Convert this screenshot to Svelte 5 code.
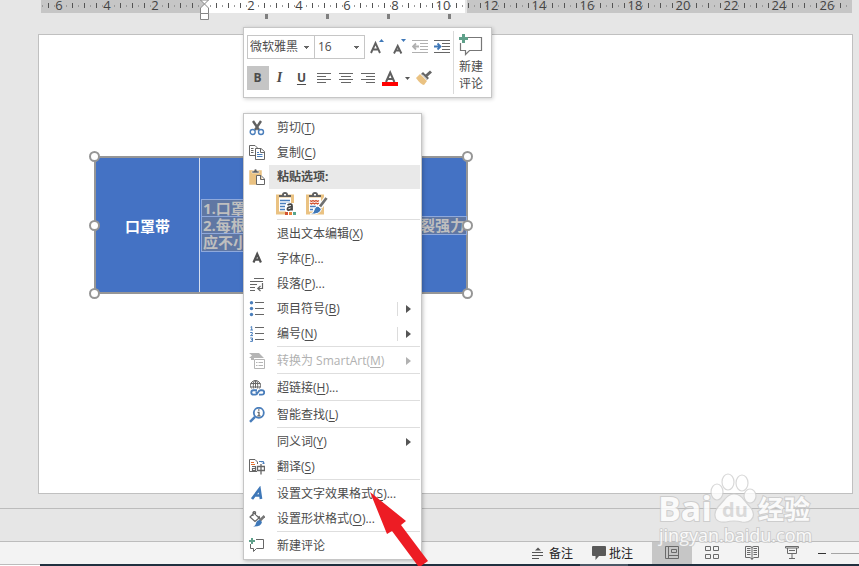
<script>
  const CM = 24;
  const ORIGIN = 163;
  const labels = [];
  const ticks = [];
  const dots = [];
  for (let n = -6; n <= 26; n += 2) {
    if (n !== 0) labels.push({ x: ORIGIN - 1 + n * CM, text: Math.abs(n) });
  }
  for (let i = -13; i <= 53; i++) {
    if (i % 4 !== 0) ticks.push(ORIGIN + i * 12);
    dots.push(ORIGIN + i * 12 - 6);
  }
  dots.push(ORIGIN + 53 * 12 + 6);
  const tabStops = [224, 285, 346, 407];

  const menu = [
    { icon: 'cut', text: '剪切', key: 'T' },
    { icon: 'copy', text: '复制', key: 'C' },
    { header: '粘贴选项:' },
    { paste: true },
    { sep: true },
    { text: '退出文本编辑', key: 'X' },
    { icon: 'font', text: '字体', key: 'F', more: true },
    { icon: 'paragraph', text: '段落', key: 'P', more: true },
    { icon: 'bullets', text: '项目符号', key: 'B', sub: true, split: true },
    { icon: 'numbers', text: '编号', key: 'N', sub: true, split: true },
    { sep: true },
    { icon: 'smartart', text: '转换为 SmartArt', key: 'M', sub: true, disabled: true },
    { sep: true },
    { icon: 'link', text: '超链接', key: 'H', more: true },
    { sep: true },
    { icon: 'lookup', text: '智能查找', key: 'L' },
    { sep: true },
    { text: '同义词', key: 'Y', sub: true },
    { icon: 'translate', text: '翻译', key: 'S' },
    { sep: true },
    { icon: 'effects', text: '设置文字效果格式', key: 'S', more: true },
    { icon: 'shape', text: '设置形状格式', key: 'O', more: true },
    { sep: true },
    { icon: 'comment', text: '新建评论' }
  ];

  const handles = ['tl', 'ml', 'bl', 'tr', 'mr', 'br'];
  const views = [
    { id: 'normal', name: '普通' },
    { id: 'sorter', name: '幻灯片浏览' },
    { id: 'reading', name: '阅读视图' },
    { id: 'show', name: '幻灯片放映' }
  ];
  let view = $state('normal');
  let fontName = $state('微软雅黑');
  let fontSize = $state('16');
  let zoom = $state(60);
</script>

{#snippet icon(name)}
  <svg class="icon" width="16" height="16" viewBox="0 0 16 16" fill="none" stroke="#666" stroke-width="1" aria-hidden="true">
    {#if name === 'cut'}
      <path d="M4 1l6 9M12 1L6 10" stroke-width="2.4" stroke="#606060" />
      <circle cx="3.7" cy="12" r="2.5" stroke="#4a7ebb" stroke-width="1.4" />
      <circle cx="12" cy="12" r="2.5" stroke="#4a7ebb" stroke-width="1.4" />
    {:else if name === 'copy'}
      <path d="M6 10.500H.5V.5H6L8.500 3M2 3.500H4.500M2 5.500H4.500M2 7.500H4.500" />
      <path d="M6.500 3.500H12L15.500 6.500V14.500H6.500ZM11.500 4V7.500H15" fill="#fff" />
      <path d="M8 7.500H10M8 9.500H13.500M8 11.500H13.500" stroke="#4a7ebb" />
    {:else if name === 'font'}
      <path d="M4.500 11.500L8.200 3L11.900 11.500M5.800 8.700H10.600" stroke-width="2.200" stroke="#505050" />
    {:else if name === 'paragraph'}
      <path d="M5 2.500H15M1 5.500H14M1 8.500H8M1 11.500H6M1 14.500H6" />
      <path d="M13.500 7V12.500H9M11.500 10L8.800 12.500L11.500 15" stroke-width="1.200" />
    {:else if name === 'bullets'}
      <path d="M6 1.500H15M6 7.500H15M6 13.500H15" />
      <g fill="#4a7ebb" stroke="none"><circle cx="2.500" cy="1.700" r="1.700" /><circle cx="2.500" cy="7.500" r="1.700" /><circle cx="2.500" cy="13.500" r="1.700" /></g>
    {:else if name === 'numbers'}
      <path d="M6 1.500H15M6 7.500H15M6 13.500H15" />
      <path d="M1.500 1.200L2.700 .5V4M1.300 4H4M1.200 6.500H3.300V8.200L1.500 9.600H4M1.200 12H3.500V15.400H1.200M2 13.700H3.500" stroke="#4a7ebb" />
    {:else if name === 'smartart'}
      <path d="M0 0H10L15 5H5V7H2V5H0L3 2.500Z" fill="#b5b5b5" stroke="none" />
      <path d="M5.500 6.500H15.500V15.500H5.500Z" fill="#fff" stroke="#b5b5b5" />
      <path d="M7 9.500H8.500M9.500 9.500H14M7 12.500H8.500M9.500 12.500H14" stroke="#b5b5b5" />
    {:else if name === 'link'}
      <circle cx="6.500" cy="5.500" r="5" />
      <ellipse cx="6.500" cy="5.500" rx="2.200" ry="5" />
      <path d="M1.500 3.500H11.500M1.500 7H11.500M6.500 .5V8" />
      <path d="M1 8.500H16V16H1Z" fill="#fff" stroke="none" />
      <path d="M8 10.200H4.500A2.200 2.200 0 0 0 4.500 14.600H6.500Q8 14.600 9 12.400T11.500 10.200H13A2.200 2.200 0 0 1 13 14.600H10M6.500 12.400H8" stroke="#4a7ebb" stroke-width="1.900" />
    {:else if name === 'lookup'}
      <circle cx="9.800" cy="5.800" r="5" stroke="#4a7ebb" stroke-width="1.800" />
      <path d="M6 9.800L1 14.800" stroke="#4a7ebb" stroke-width="2.500" />
      <path d="M9.800 2.300V3.800M8.500 5.300H10V8.800M8.300 8.800H11.500" stroke-width="1.300" />
    {:else if name === 'translate'}
      <path d="M8 12.500H.5V.5H6L8.500 3V5" />
      <path d="M2 3.500H5M2 5.500H6" stroke="#e0702f" />
      <path d="M3 7.500H6.500V11.500H3.500V9.500H6.500" stroke-width="1.200" />
      <path d="M8.500 7.500H15.500V11.500H8.500ZM12 5V15.500" stroke-width="1.300" />
      <path d="M10 2.500H14.500V5M13 3.500L14.500 5L16 3.500" stroke="#4a7ebb" />
    {:else if name === 'effects'}
      <path d="M3 13L10.500 3L12 13M6 9.500H11.500" stroke="#3f78b8" stroke-width="2.700" />
    {:else if name === 'shape'}
      <path d="M5 2L10 7L6 10.500L1 6ZM4 5V1.500Q5 0 6.500 1V4M10 5L11 8" stroke-width="1.200" />
      <path d="M15.500 5L10.500 10" stroke="#777" stroke-width="2.500" />
      <path d="M11 9L13 11Q12 16 4 15.500Q7 14.500 7 12Q8 9 11 9Z" fill="#3f78b8" stroke="none" />
    {:else if name === 'comment'}
      <path d="M7 1.500H14.500V10.500H7.500L4.500 13.500V10.500H1.500V6" />
      <path d="M3 0V6M0 3H6" stroke="#5fa08a" stroke-width="2" />
    {/if}
  </svg>
{/snippet}

{#snippet clipboard(kind)}
  <svg width="24" height="24" viewBox="0 0 24 24" fill="none" aria-hidden="true">
    <path d="M2.500 4H17.500V21H2.500Z" stroke="#eac282" stroke-width="3" fill="#fff" />
    <path d="M4 5V3H7Q7 0 10 0T13 3H16V5Z" fill="#606060" />
    <path d="M9 2H11V3.500H9Z" fill="#fff" />
    {#if kind === 'theme'}
      <path d="M5 8.500H15M5 11.500H15M5 14.500H10M5 17.500H10" stroke="#4a7ebb" stroke-width="1.500" />
      <path d="M11 11H21V24H11Z" fill="#fff" />
      <path d="M12.500 13Q17 11 17 14V18.500M17 15Q12.500 14.500 12.500 17T17 16.500" stroke="#444" stroke-width="1.800" />
      <path d="M10 20H13V23H10Z" fill="#d35230" /><path d="M14 20H17V23H14Z" fill="#e8823a" /><path d="M18 20H21V23H18Z" fill="#58a58c" />
    {:else}
      <path d="M5 8.500l1.500 1 1.500-1 1.500 1 1.500-1 1.500 1 1.500-1M5 11l1.500 1 1.500-1 1.500 1 1.500-1 1.500 1 1.500-1" stroke="#d35230" stroke-width="1.300" />
      <path d="M5 14.500H11M5 17.500H8" stroke="#4a7ebb" stroke-width="1.500" />
      <path d="M21.500 6L15 15" stroke="#fff" stroke-width="5" /><path d="M21.500 6L15 14.500" stroke="#707070" stroke-width="2.800" />
      <path d="M13 14L16.500 17Q15 23 5 22Q9 21 9 18Q10 14 13 14Z" fill="#3f78b8" stroke="#fff" />
    {/if}
  </svg>
{/snippet}

<div class="app">
  <div class="ruler">
    <div class="out"></div>
    <div class="in"></div>
    <div class="out rest"></div>
    <svg class="scale" height="21" aria-hidden="true">
      {#each dots as x}<rect x={x} y="5" width="1" height="2" fill="#9a9a9a" />{/each}
      {#each ticks as x}<rect x={x} y="3" width="1" height="5" fill="#555" />{/each}
      {#each labels as l}<text x={l.x} y="10" text-anchor="middle">{l.text}</text>{/each}
      {#each tabStops as x}<rect {x} y="14" width="3" height="5" fill="#7f7f7f" />{/each}
      <path d="M159.500 0L167.500 8V13.500H159.500V8L167.500 0Z" fill="#fff" stroke="#858585" />
      <path d="M159.500 13.500H167.500V19.500H159.500Z" fill="#fff" stroke="#858585" />
    </svg>
  </div>

  <main class="workspace">
    <div class="slide">
      <div class="shape">
        <div class="cell name">口罩带</div>
        <div class="cell body">
          <div class="selection">
            <span class="line short"><span>1.口罩</span></span>
            <span class="line"><span>2.每根</span><span>裂强力</span></span>
            <span class="line short"><span>应不小</span></span>
          </div>
        </div>
        {#each handles as h}<i class="handle {h}"></i>{/each}
      </div>
    </div>
  </main>

  <div class="notes"></div>

  <footer class="status">
    <button class="pane">
      <svg width="14" height="12" viewBox="0 0 14 12" aria-hidden="true"><path d="M0 5.500H11M0 8.500H11M0 11.500H7" stroke="#555" /><path d="M3 3.500L6 .5L9 3.500Z" fill="#555" /></svg>
      备注
    </button>
    <button class="pane">
      <svg width="14" height="14" viewBox="0 0 14 14" aria-hidden="true"><path d="M1 0H13Q14 0 14 1V9Q14 10 13 10H7L3.500 14V10H1Q0 10 0 9V1Q0 0 1 0Z" fill="#595959" /></svg>
      批注
    </button>
    <div class="views">
      {#each views as v}
        <button class:active={view === v.id} aria-label={v.name} onclick={() => (view = v.id)}>
          <svg width="14" height="14" viewBox="0 0 14 14" fill="none" stroke="#6a6a6a" aria-hidden="true">
            {#if v.id === 'normal'}
              <path d="M.5 .5H13.500V12.500H.5ZM3.500 .5V12.500M3.500 9.500H13.500M6.500 3.500H11.500V6.500H6.500Z" />
            {:else if v.id === 'sorter'}
              <path d="M.5 .5H5.500V4.500H.5ZM8.500 .5H13.500V4.500H8.500ZM.5 8.500H5.500V12.500H.5ZM8.500 8.500H13.500V12.500H8.500Z" />
            {:else if v.id === 'reading'}
              <path d="M.5 .5H5Q7 .5 7 2Q7 .5 9 .5H13.500V11.500H9L7 13L5 11.500H.5ZM7 2V14M2 2.500H5.500M2 4.500H5.500M2 6.500H5.500M2 8.500H5.500M8.500 2.500H12M8.500 4.500H12M8.500 6.500H12M8.500 8.500H12" />
            {:else}
              <path d="M.5 .5H13.500V2H.5ZM2.500 2V7.500H11.500V2M7 8V12M4 12.500H10" /><path d="M4 4.500H10" />
            {/if}
          </svg>
        </button>
      {/each}
    </div>
    <button class="minus" aria-label="缩小"><span></span></button>
    <input class="zoom" type="range" min="10" max="400" bind:value={zoom} aria-label="缩放" />
  </footer>
  <div class="taskbar"><i class="edge"></i><i class="lead"></i><i class="task"></i><i class="fill"></i></div>

  <div class="watermark">
    <svg width="158" height="80" viewBox="0 0 158 80" aria-hidden="true">
      <g fill="#fff" stroke="#d0d0d0" stroke-width="1.200">
        <ellipse cx="60" cy="24" rx="6" ry="8" />
        <ellipse cx="71" cy="14" rx="6" ry="8" />
        <ellipse cx="85" cy="15" rx="6" ry="8" />
        <ellipse cx="93" cy="28" rx="6" ry="7" />
        <path d="M77 26Q83 26 87 32L94 40Q99 47 94 52Q91 55 85 54Q77 52 69 54Q62 55 59 51Q56 45 61 39L68 31Q72 26 77 26Z" />
      </g>
      <g class="mark">
        <text x="1" y="53" font-size="34" font-weight="700">Bai</text>
        <text class="du" x="65" y="49" font-size="20" font-weight="700">du</text>
        <text x="101" y="51" font-size="26" font-weight="700">经验</text>
        <text class="site" x="2" y="74" font-size="18">jingyan.baidu.com</text>
      </g>
    </svg>
  </div>

  <div class="mini" role="toolbar" aria-label="格式">
    <div class="tools">
      <div class="row">
        <select class="family" bind:value={fontName} aria-label="字体"><option>微软雅黑</option></select>
        <select class="size" bind:value={fontSize} aria-label="字号"><option>16</option></select>
        <button aria-label="增大字号"><svg width="16" height="18" viewBox="0 0 16 18" aria-hidden="true"><path d="M3 15L7.500 5L12 15M4.800 11.500H10.200" fill="none" stroke="#606060" stroke-width="1.900" /><path d="M11 4L13.500 1L16 4Z" fill="#3f78b8" /></svg></button>
        <button aria-label="减小字号"><svg width="16" height="18" viewBox="0 0 16 18" aria-hidden="true"><path d="M4 15.500L7.700 8L11.400 15.500M5.500 12.500H10" fill="none" stroke="#606060" stroke-width="1.900" /><path d="M11 1L13.500 4L16 1Z" fill="#3f78b8" /></svg></button>
        <button aria-label="减少缩进" disabled><svg width="16" height="14" viewBox="0 0 16 14" fill="none" stroke="#b0b0b0" aria-hidden="true"><path d="M0 .5H16M8 3.500H16M8 6.500H16M8 9.500H16M0 12.500H16" /><path d="M7 6.500H1M4 3.500L1 6.500L4 9.500" stroke-width="1.800" /></svg></button>
        <button aria-label="增加缩进"><svg width="16" height="14" viewBox="0 0 16 14" fill="none" stroke="#666" aria-hidden="true"><path d="M0 .5H16M8 3.500H16M8 6.500H16M8 9.500H16M0 12.500H16" /><path d="M0 6.500H6M3.500 3.500L6.500 6.500L3.500 9.500" stroke="#3f78b8" stroke-width="1.800" /></svg></button>
      </div>
      <div class="row">
        <button class="on" aria-label="加粗"><b>B</b></button>
        <button aria-label="倾斜"><em>I</em></button>
        <button aria-label="下划线"><u class="under">U</u></button>
        <button aria-label="左对齐"><svg width="14" height="11" viewBox="0 0 14 11" stroke="#666" aria-hidden="true"><path d="M0 .5H14M0 3.500H9M0 6.500H14M0 9.500H9" /></svg></button>
        <button aria-label="居中"><svg width="14" height="11" viewBox="0 0 14 11" stroke="#666" aria-hidden="true"><path d="M0 .5H14M2 3.500H12M0 6.500H14M2 9.500H12" /></svg></button>
        <button aria-label="右对齐"><svg width="14" height="11" viewBox="0 0 14 11" stroke="#666" aria-hidden="true"><path d="M0 .5H14M5 3.500H14M0 6.500H14M5 9.500H14" /></svg></button>
        <button aria-label="字体颜色"><svg width="16" height="16" viewBox="0 0 16 16" aria-hidden="true"><path d="M4 12L8.200 2.500L12.400 12M5.500 9H11" fill="none" stroke="#606060" stroke-width="2" /><path d="M0 12H16V16H0Z" fill="#f00" /></svg></button>
        <button class="drop" aria-label="更多颜色"><svg width="5" height="3" viewBox="0 0 5 3" aria-hidden="true"><path d="M0 0H5L2.500 3Z" fill="#555" /></svg></button>
        <button aria-label="格式刷"><svg width="16" height="16" viewBox="0 0 16 16" aria-hidden="true"><path d="M0 8L4 4L11 11L8 15Q5 15 0 8Z" fill="#eac282" /><path d="M5 4L7 2L13 8L11 10ZM9 5L14 .5L16 2.500L11 7Z" fill="#666" /><path d="M6 4.500L11 9.500" stroke="#fff" /></svg></button>
      </div>
    </div>
    <button class="newcomment">
      <svg width="24" height="22" viewBox="0 0 24 22" fill="none" aria-hidden="true"><path d="M9 3.500H22.500V16.500H10.500L6.500 20.500V16.500H1.500V9" stroke="#777" stroke-width="1.200" /><path d="M4.500 0V9M0 4.500H9" stroke="#5fa08a" stroke-width="3" /></svg>
      <span>新建</span><span>评论</span>
    </button>
  </div>

  <div class="menu" role="menu">
    {#each menu as m}
      {#if m.sep}
        <div class="sep" role="separator"></div>
      {:else if m.header}
        <div class="head">
          <svg class="icon" width="16" height="16" viewBox="0 0 16 16" fill="none" aria-hidden="true"><path d="M2 3H11V14H2Z" stroke="#eac282" stroke-width="3.500" fill="#eac282" /><path d="M3 4V2H5Q5 0 6.500 0T8 2H10V4Z" fill="#606060" stroke="#fff" stroke-width=".5" /><path d="M7.500 6.500H12L15.500 10V15.500H7.500ZM11.500 7V10.500H15" fill="#fff" stroke="#666" /></svg>
          <span>{m.header}</span>
        </div>
      {:else if m.paste}
        <div class="paste">
          <button aria-label="使用目标主题">{@render clipboard('theme')}</button>
          <button aria-label="保留源格式">{@render clipboard('source')}</button>
        </div>
      {:else}
        <button class="item" role="menuitem" disabled={m.disabled}>
          {@render icon(m.icon)}
          <span class="text">{m.text}{#if m.key}(<u>{m.key}</u>){/if}{#if m.more}...{/if}</span>
          {#if m.sub}
            <span class="sub" class:split={m.split}><svg width="5" height="8" viewBox="0 0 5 8" aria-hidden="true"><path d="M0 0L5 4L0 8Z" fill="currentColor" /></svg></span>
          {/if}
        </button>
      {/if}
    {/each}
  </div>

  <svg class="pointer" width="60" height="76" viewBox="0 0 60 76" aria-hidden="true"><path d="M1 2L37 31L32 35L59 71L52 76H49L23 41L18 44Z" fill="#ed1c24" /></svg>
</div>

<style>
  :global(body) { margin: 0; background: #e6e6e6; }
  .app, .app button, .app select {
    font-family: "Open Sans", "Noto Sans CJK SC", sans-serif;
    font-size: 12px;
    color: #4c4c4c;
  }
  .app { position: relative; display: flex; flex-direction: column; min-height: 100vh; overflow: hidden; background: #e6e6e6; }
  button { border: 0; margin: 0; padding: 0; background: none; }
  svg { display: block; flex: none; }

  .ruler { position: relative; display: flex; height: 13px; margin: 0 7px 0 41px; }
  .out { width: 163px; background: #c6c6c6; }
  .in { width: 261px; background: #fff; }
  .rest { flex: 1; margin-left: 2px; }
  .scale { position: absolute; left: 0; top: 0; width: 100%; overflow: visible; }
  .scale text { font-size: 13px; fill: #444; }

  .workspace { flex: 1; padding: 21px 6px 14px 38px; display: flex; }
  .slide { position: relative; flex: 1; border: 1px solid #c0c0c0; background: #fff; }
  .shape {
    position: absolute; left: 55px; top: 121px; width: 374px; height: 138px; box-sizing: border-box;
    display: flex; border: 2px solid #969696; background: #4472c4;
  }
  .cell { display: flex; align-items: center; }
  .name { width: 103px; justify-content: center; border-right: 1px solid #d5def0; font-size: 15px; font-weight: 700; color: #fff; }
  .body { flex: 1; padding-left: 2px; }
  .selection { flex: 1; display: flex; flex-direction: column; font-size: 15px; font-weight: 700; line-height: 17px; color: #bfbfbf; }
  .line { display: flex; justify-content: space-between; background: #6077a3; outline: 1px solid #8fa9dc; padding: 0 1px; }
  .short { width: 150px; }
  .handle { position: absolute; width: 7px; height: 7px; border: 2px solid #969696; border-radius: 50%; background: #fff; }
  .tl, .ml, .bl { left: -7px; }
  .tr, .mr, .br { right: -7px; }
  .tl, .tr { top: -7px; }
  .ml, .mr { top: 62px; }
  .bl, .br { bottom: -7px; }

  .notes { height: 32px; border: 1px solid #bcbcbc; border-width: 1px 0; }
  .status { display: flex; justify-content: flex-end; height: 22px; background: #f3f3f3; }
  .app .pane { display: flex; align-items: center; gap: 3px; margin-right: 19px; color: #222; }
  .views { display: flex; }
  .views button { width: 40px; display: flex; align-items: center; justify-content: center; }
  .views .active { background: #c6c6c6; }
  .minus { width: 19px; display: flex; align-items: center; justify-content: center; }
  .minus span { width: 8px; height: 1px; background: #333; }
  .zoom { appearance: none; width: 28px; height: 1px; margin: 11px 0 0; background: #a5a5a5; }
  .zoom::-webkit-slider-thumb { appearance: none; width: 0; height: 0; }
  .taskbar { display: flex; height: 2px; background: #20303f; }
  .edge { width: 40px; height: 1px; border-bottom: 1px solid #fff; background: #bcbcbc; }
  .lead { flex: 1; }
  .task { width: 48px; background: #4b5866; }
  .fill { width: 231px; }

  .watermark { position: absolute; right: 44px; bottom: 18px; opacity: .8; }
  .mark text { fill: #fff; stroke: #c8c8c8; stroke-width: 2px; paint-order: stroke; }
  .mark .du { fill: #d8d8d8; stroke: none; }

  .mini {
    position: absolute; left: 243px; top: 27px; display: flex; box-sizing: border-box; height: 71px;
    border: 1px solid #c6c6c6; background: #fff; box-shadow: 1px 1px 4px rgba(0, 0, 0, .2);
  }
  .tools { padding: 7px 0 7px 3px; display: flex; flex-direction: column; justify-content: space-between; }
  .row { display: flex; height: 24px; }
  .row button { width: 22px; display: flex; align-items: center; justify-content: center; }
  .row .drop { width: 12px; }
  .row .on { background: #c5c5c5; }
  .row b, .under { font-weight: 700; }
  .row b, .row em, .under { padding: 0 1px 1px 0; }
  .row em { font-family: "Liberation Serif", serif; font-size: 14px; font-weight: 700; }
  select {
    appearance: none; box-sizing: border-box; height: 24px; margin: 0; padding: 0 0 1px 2px; border: 1px solid #c6c6c6; border-radius: 0;
    background: conic-gradient(from -45deg at 50% 100%, #666 90deg, transparent 0) right 5px center / 5px 3px no-repeat #fff;
  }
  .family { width: 68px; }
  .size { width: 50px; border-left: 0; padding-left: 3px; }
  .newcomment { display: flex; flex-direction: column; align-items: center; width: 38px; position: relative; padding: 6px 2px 0 0; line-height: 17px; }
  .newcomment::before { content: ""; position: absolute; left: 0; top: 3px; bottom: 3px; width: 1px; background: #dadada; }
  .newcomment svg { margin-bottom: 2px; }

  .menu {
    position: absolute; left: 243px; top: 113px; width: 179px; box-sizing: border-box; padding: 1px 0;
    border: 1px solid #c6c6c6; background: #fff; box-shadow: 1px 1px 4px rgba(0, 0, 0, .25);
  }
  .item { display: flex; align-items: center; width: 100%; height: 25px; text-align: left; white-space: nowrap; }
  .app .item:disabled { color: #b1b1b1; }
  .icon { margin: 0 4px 0 5px; }
  .text { flex: 1; padding: 0 0 2px 8px; }
  u { text-underline-offset: 2px; }
  .sub { width: 24px; height: 14px; display: flex; align-items: center; padding-left: 8px; box-sizing: border-box; border-left: 1px solid transparent; color: #555; }
  .split { border-left-color: #dcdcdc; }
  .item:disabled .sub { color: #b1b1b1; }
  .head { display: flex; align-items: center; height: 24px; font-weight: 700; }
  .head span { flex: 1; margin-right: 1px; padding-left: 8px; line-height: 24px; background: #e9e9e9; }
  .paste { display: flex; gap: 6px; height: 30px; align-items: center; padding-left: 31px; }
  .sep { height: 1px; margin: 0 1px 1px 33px; background: #dedede; }
  .pointer { position: absolute; left: 369px; top: 490px; }
</style>
